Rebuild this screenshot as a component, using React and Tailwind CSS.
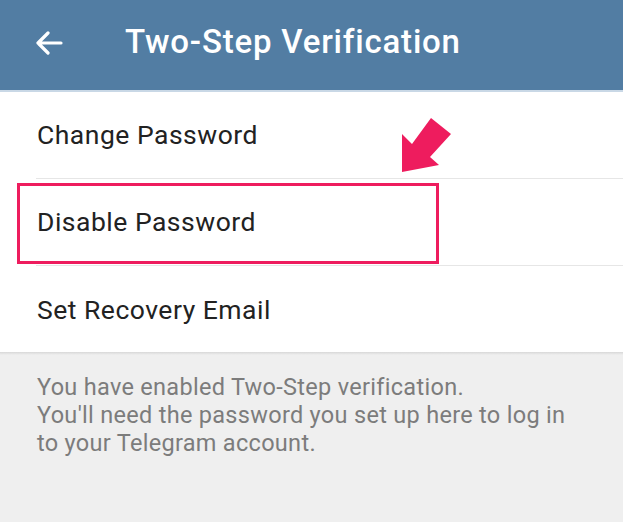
import React from 'react';

const rows = ['Change Password', 'Disable Password', 'Set Recovery Email'];

export default function App() {
  return (
    <div className="relative w-[623px] h-[522px] bg-[#efefef] overflow-hidden" style={{ fontFamily: 'Roboto, "Liberation Sans", sans-serif' }}>
      <div className="h-[90px] bg-[#527da3] flex items-center pb-[7px]">
        <svg width="28" height="24" viewBox="0 0 28 24" className="ml-[35px] mt-[3px]">
          <path d="M26 12H3M13 2L3 12l10 10" fill="none" stroke="#fff" strokeWidth="3.2" strokeLinecap="round" strokeLinejoin="round" />
        </svg>
        <h1 className="ml-[62px] text-white text-[33px] font-medium tracking-[0.8px]">Two-Step Verification</h1>
      </div>
      <div className="h-[2px] bg-[#c9d8e6]"></div>
      <div className="bg-white">
        {rows.map((r, i) => (
          <div key={r} className="h-[87px] flex flex-col">
            <div className="flex-1 flex items-center pl-[37px] text-[26.5px] tracking-[0.5px] text-[#222]">{r}</div>
            {i < rows.length - 1 && <div className="ml-[36px] h-px bg-[#e6e6e6]"></div>}
          </div>
        ))}
      </div>
      <div className="h-[3px] bg-gradient-to-b from-[#d8d8d8] to-[#efefef] -mt-[1px]"></div>
      <p className="pl-[37px] pt-[18px] text-[23.5px] leading-[28px] tracking-[0.3px] text-[#7c7c7c]">
        You have enabled Two-Step verification.<br />
        You'll need the password you set up here to log in<br />
        to your Telegram account.
      </p>
      <div className="absolute left-[17px] top-[183px] w-[422px] h-[81px] border-[3px] border-[#ee1c5e]"></div>
      <svg className="absolute left-0 top-0" width="623" height="522" viewBox="0 0 623 522">
        <polygon points="402,134 412,144 431,118 451,134 430,157 439,165 402,172" fill="#ee1c5e" />
      </svg>
    </div>
  );
}
